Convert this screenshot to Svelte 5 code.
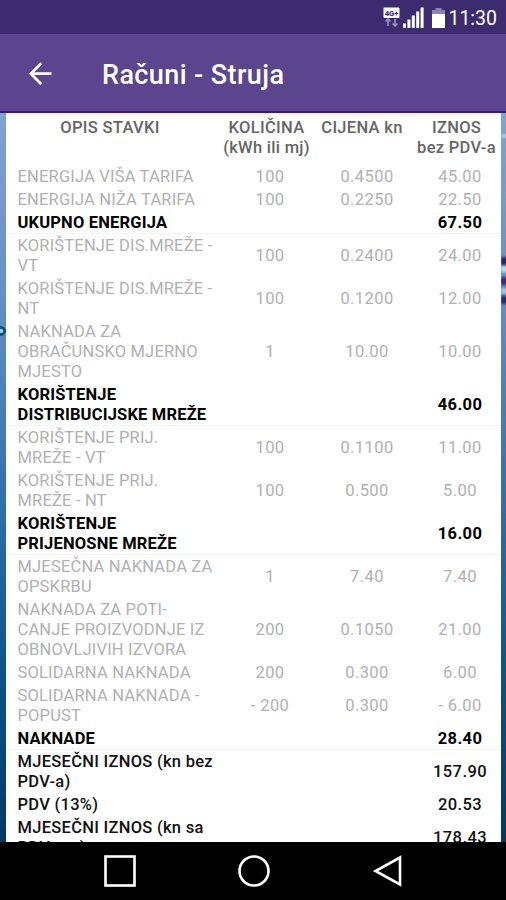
<script lang="ts">
interface Row {
	label: string[];
	qty?: string;
	price?: string;
	amount: string;
	kind?: "sum" | "total";
	divider?: boolean;
}

const rows: Row[] = [
	{ label: ["ENERGIJA VIŠA TARIFA"], qty: "100", price: "0.4500", amount: "45.00" },
	{ label: ["ENERGIJA NIŽA TARIFA"], qty: "100", price: "0.2250", amount: "22.50" },
	{ label: ["UKUPNO ENERGIJA"], amount: "67.50", kind: "sum", divider: true },
	{ label: ["KORIŠTENJE DIS.MREŽE -", "VT"], qty: "100", price: "0.2400", amount: "24.00" },
	{ label: ["KORIŠTENJE DIS.MREŽE -", "NT"], qty: "100", price: "0.1200", amount: "12.00" },
	{ label: ["NAKNADA ZA", "OBRAČUNSKO MJERNO", "MJESTO"], qty: "1", price: "10.00", amount: "10.00" },
	{ label: ["KORIŠTENJE", "DISTRIBUCIJSKE MREŽE"], amount: "46.00", kind: "sum", divider: true },
	{ label: ["KORIŠTENJE PRIJ.", "MREŽE - VT"], qty: "100", price: "0.1100", amount: "11.00" },
	{ label: ["KORIŠTENJE PRIJ.", "MREŽE - NT"], qty: "100", price: "0.500", amount: "5.00" },
	{ label: ["KORIŠTENJE", "PRIJENOSNE MREŽE"], amount: "16.00", kind: "sum", divider: true },
	{ label: ["MJESEČNA NAKNADA ZA", "OPSKRBU"], qty: "1", price: "7.40", amount: "7.40" },
	{ label: ["NAKNADA ZA POTI-", "CANJE PROIZVODNJE IZ", "OBNOVLJIVIH IZVORA"], qty: "200", price: "0.1050", amount: "21.00" },
	{ label: ["SOLIDARNA NAKNADA"], qty: "200", price: "0.300", amount: "6.00" },
	{ label: ["SOLIDARNA NAKNADA -", "POPUST"], qty: "- 200", price: "0.300", amount: "- 6.00" },
	{ label: ["NAKNADE"], amount: "28.40", kind: "sum", divider: true },
	{ label: ["MJESEČNI IZNOS (kn bez", "PDV-a)"], amount: "157.90", kind: "total" },
	{ label: ["PDV (13%)"], amount: "20.53", kind: "total" },
	{ label: ["MJESEČNI IZNOS (kn sa", "PDV-om)"], amount: "178.43", kind: "total" },
];
</script>

<div class="screen">
  <div class="status">
    <svg class="net" width="17" height="20" viewBox="0 0 17 20">
      <rect x="0.5" y="0.5" width="16" height="10.5" rx="1" fill="#fff" />
      <text x="8.5" y="8.5" text-anchor="middle">4G+</text>
      <path d="M5 12v7M2.500 14.500 5 12l2.500 2.500M12 12v7M9.500 16.500 12 19l2.500-2.500" fill="none" stroke="#9d8fc0" stroke-width="1.700" />
    </svg>
    <svg class="signal" width="21" height="21" viewBox="0 0 21 21" fill="#fff">
      <rect x="0" y="16.500" width="3" height="4.500" />
      <rect x="4.400" y="12.500" width="3" height="8.500" />
      <rect x="8.800" y="8.500" width="3" height="12.500" />
      <rect x="13.200" y="4.500" width="3" height="16.500" />
      <rect x="17.600" y="0.500" width="3" height="20.500" />
    </svg>
    <svg class="battery" width="13" height="20" viewBox="0 0 13 20">
      <path d="M3.500 0h6v2H13v5H0V2h3.500z" fill="#8e82b4" />
      <rect y="6" width="13" height="14" fill="#fff" />
    </svg>
    <span class="clock">11:30</span>
  </div>

  <header class="bar">
    <svg class="back" width="24" height="24" viewBox="0 0 24 24" fill="none" stroke="#fff" stroke-width="2.700">
      <path d="M23.500 11.700H3M13.300 1.200 2.800 11.700 13.300 22.200" />
    </svg>
    <h1 class="title">Računi - Struja</h1>
  </header>

  <main class="body">
    <section class="sheet">
      <div class="row head">
        <div class="desc">OPIS STAVKI</div>
        <div class="qty">KOLIČINA<br />(kWh ili mj)</div>
        <div class="price">CIJENA kn</div>
        <div class="amount">IZNOS<br />bez PDV-a</div>
      </div>
      {#each rows as row}
        <div class="row {row.kind ?? 'item'}" class:divider={row.divider}>
          <div class="desc">
            {#each row.label as line}
              <div>{line}</div>
            {/each}
          </div>
          <div class="qty">{row.qty ?? ''}</div>
          <div class="price">{row.price ?? ''}</div>
          <div class="amount">{row.amount}</div>
        </div>
      {/each}
    </section>
  </main>

  <nav class="nav">
    <svg width="32" height="32" viewBox="0 0 32 32"><rect x="1.500" y="1.500" width="29" height="29" /></svg>
    <svg width="32" height="32" viewBox="0 0 32 32"><circle cx="16" cy="16" r="14.500" /></svg>
    <svg width="32" height="32" viewBox="0 0 32 32"><path d="M29 2.500v27L4.500 16z" /></svg>
  </nav>
</div>

<style>
  .screen {
    display: flex;
    flex-direction: column;
    width: 506px;
    height: 900px;
    overflow: hidden;
    font-family: Roboto, "Noto Sans", sans-serif;
  }

  .status {
    display: flex;
    flex: 0 0 34px;
    align-items: center;
    justify-content: flex-end;
    padding-right: 9px;
    background: #3d2b70;
    color: #fff;
  }

  .net text {
    font-size: 7.5px;
    font-weight: 900;
    fill: #3d2b70;
  }

  .signal {
    margin-left: 3px;
  }

  .battery {
    margin-left: 8px;
    margin-top: 2px;
  }

  .clock {
    margin-left: 3px;
    margin-top: 3px;
    font-size: 19.5px;
    line-height: 24px;
  }

  .bar {
    box-sizing: border-box;
    display: flex;
    flex: 0 0 79px;
    align-items: center;
    padding: 2px 0 0 28px;
    border-bottom: 2px solid #3d1784;
    background: #5b458f;
  }

  .title {
    margin: 2px 0 0 50px;
    color: #fff;
    font-size: 27px;
    font-weight: 500;
    letter-spacing: 0.4px;
  }

  .body {
    flex: 1;
    min-height: 0;
    padding: 0 5px 0 6px;
    overflow: hidden;
    background:
      radial-gradient(5px 5px at 1px 218px, #9cc7e0 40%, #0d5278 50% 90%, transparent),
      radial-gradient(5px 6px at 504px 148px, #2a2476 40%, transparent),
      radial-gradient(5px 5px at 504px 156px, #a9dcee 40%, transparent),
      radial-gradient(5px 6px at 504px 168px, #3b2a80 40%, transparent),
      radial-gradient(5px 4px at 504px 178px, #9fc4ec 40%, transparent),
      radial-gradient(5px 6px at 504px 187px, #272a7c 40%, transparent),
      radial-gradient(5px 3px at 504px 23px, #a5c9ea 40%, transparent),
      linear-gradient(#82a3d2, #658fc4 25%, #3a72ae 50%, #10548a 76%, #053765);
  }

  .sheet {
    padding-top: 5px;
    background: linear-gradient(#ececec, #fff 5px);
    font-size: 16.5px;
    line-height: 20px;
    letter-spacing: 0.4px;
  }

  .row {
    box-sizing: border-box;
    display: grid;
    grid-template-columns: 208px 112px 82px 93px;
    align-items: center;
    padding: 1.5px 0;
    text-align: center;
    white-space: nowrap;
  }

  .desc {
    padding-left: 11.5px;
    text-align: left;
    letter-spacing: 0.18px;
  }

  .amount {
    padding-left: 11px;
  }

  .head {
    align-items: start;
    padding: 0 0 7px;
    color: #666;
    font-weight: 500;
    letter-spacing: 0.3px;
  }

  .head .desc {
    padding-left: 0;
    text-align: center;
    letter-spacing: 0.3px;
  }

  .head .qty {
    padding-right: 7px;
  }

  .head .price {
    margin: 0 0 0 -10px;
  }

  .head .amount {
    padding-left: 4px;
  }

  .item {
    color: #b1b1b1;
  }

  .sum {
    color: #000;
    font-weight: 700;
  }

  .total {
    color: #111;
    font-weight: 500;
  }

  .total .desc {
    letter-spacing: 0.28px;
  }

  .divider {
    box-shadow: inset 0 -1px #f3f3f3;
  }

  .nav {
    display: flex;
    flex: 0 0 58px;
    align-items: center;
    justify-content: space-between;
    padding: 0 103px 0 104px;
    background: #000;
  }

  .nav svg {
    fill: none;
    stroke: #fff;
    stroke-width: 2.6;
  }
</style>
